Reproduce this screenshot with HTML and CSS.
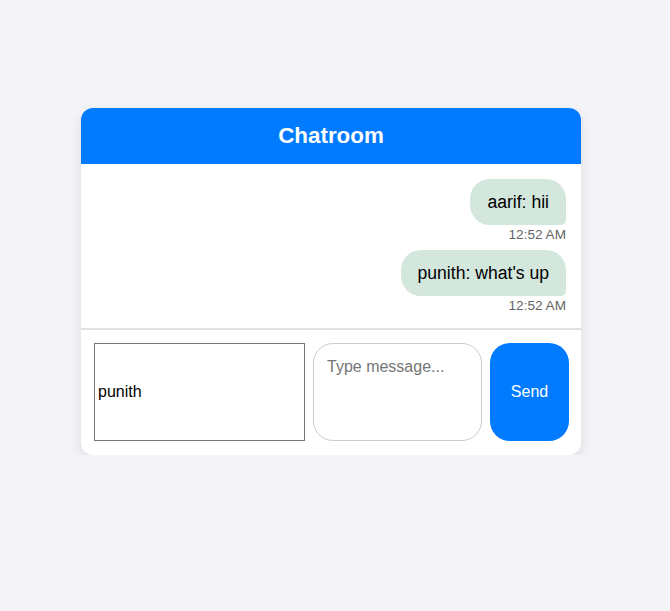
FILE: index.html
```html
<!DOCTYPE html>
<html>
<head>
<meta charset="utf-8">
<title>Chatroom</title>
<link rel="stylesheet" href="styles.css">
</head>
<body>
<div class="page">
  <div class="card">
    <div class="header">Chatroom</div>
    <div class="messages">
      <div class="message">
        <div class="bubble">aarif: hii</div>
        <div class="time">12:52 AM</div>
      </div>
      <div class="message">
        <div class="bubble">punith: what's up</div>
        <div class="time">12:52 AM</div>
      </div>
    </div>
    <div class="composer">
      <input class="name" type="text" value="punith">
      <textarea class="text" placeholder="Type message..."></textarea>
      <button class="send">Send</button>
    </div>
  </div>
</div>
</body>
</html>
```
FILE: styles.css
```css
html, body {
  margin: 0;
  padding: 0;
  background: #f4f4f8;
  font-family: "Liberation Sans", Arial, sans-serif;
}
.page {
  display: flex;
  justify-content: center;
  padding: 108px 8px 0 0;
}
.card {
  width: 500px;
  background: #fff;
  border-radius: 12px;
  box-shadow: 0 4px 12px rgba(0, 0, 0, 0.1);
  overflow: hidden;
}
.header {
  background: #007bff;
  color: #fff;
  font-weight: bold;
  font-size: 22.4px;
  line-height: 26px;
  text-align: center;
  padding: 15px 0;
}
.messages {
  padding: 15px 15px 7px;
  display: flex;
  flex-direction: column;
}
.message {
  display: flex;
  flex-direction: column;
  align-items: flex-end;
  margin-bottom: 8px;
}
.bubble {
  background: #d4e7dd;
  color: #000;
  font-size: 17.6px;
  line-height: 20px;
  padding: 13px 17px;
  border-radius: 20px 20px 5px 20px;
}
.time {
  font-size: 13.6px;
  line-height: 15px;
  color: #666;
  margin-top: 2px;
}
.composer {
  border-top: 2px solid #e0e0e0;
  padding: 13px 12px 14px 13px;
  display: flex;
  align-items: stretch;
}
.name {
  box-sizing: border-box;
  width: 211px;
  height: 98px;
  margin: 0 8px 0 0;
  border: 1px solid #767676;
  border-radius: 0;
  padding: 0 3px;
  font-family: "Liberation Sans", Arial, sans-serif;
  font-size: 16px;
  color: #000;
  outline: none;
}
.text {
  box-sizing: border-box;
  width: 169px;
  height: 98px;
  margin: 0 8px 0 0;
  border: 1px solid #ccc;
  border-radius: 20px;
  padding: 14px 13px;
  font-family: "Liberation Sans", Arial, sans-serif;
  font-size: 16px;
  resize: none;
  outline: none;
}
.text::placeholder {
  color: #757575;
}
.send {
  box-sizing: border-box;
  width: 79px;
  height: 98px;
  border: none;
  border-radius: 20px;
  background: #007bff;
  color: #fff;
  font-family: "Liberation Sans", Arial, sans-serif;
  font-size: 16px;
  padding: 0;
}
```
